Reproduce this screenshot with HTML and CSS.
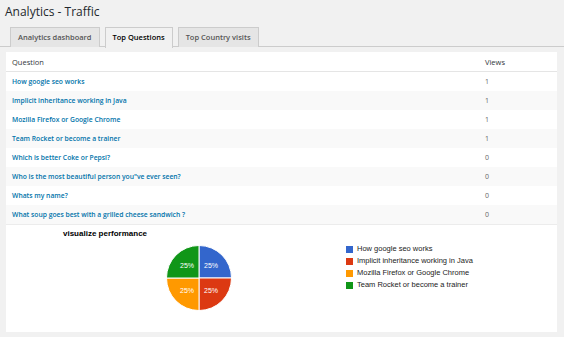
FILE: index.html
```html
<!DOCTYPE html>
<html lang="en">
<head>
  <meta charset="UTF-8">
  <title>Analytics - Traffic</title>
  <link rel="stylesheet" href="styles.css">
</head>
<body>
  <div class="wrap">
    <h1>Analytics - Traffic</h1>

    <nav class="nav-tabs">
      <a class="nav-tab" href="#">Analytics dashboard</a>
      <a class="nav-tab active" href="#">Top Questions</a>
      <a class="nav-tab" href="#">Top Country visits</a>
    </nav>

    <div class="panel">
      <table class="questions">
        <thead>
          <tr>
            <th>Question</th>
            <th class="views">Views</th>
          </tr>
        </thead>
        <tbody>
          <tr><td><a href="#">How google seo works</a></td><td class="views">1</td></tr>
          <tr><td><a href="#">Implicit inheritance working in Java</a></td><td class="views">1</td></tr>
          <tr><td><a href="#">Mozilla Firefox or Google Chrome</a></td><td class="views">1</td></tr>
          <tr><td><a href="#">Team Rocket or become a trainer</a></td><td class="views">1</td></tr>
          <tr><td><a href="#">Which is better Coke or Pepsi?</a></td><td class="views">0</td></tr>
          <tr><td><a href="#">Who is the most beautiful person you"ve ever seen?</a></td><td class="views">0</td></tr>
          <tr><td><a href="#">Whats my name?</a></td><td class="views">0</td></tr>
          <tr><td><a href="#">What soup goes best with a grilled cheese sandwich ?</a></td><td class="views">0</td></tr>
        </tbody>
      </table>

      <div class="chart">
        <div class="chart-title">visualize performance</div>
        <div class="chart-body">
          <svg class="pie" width="66" height="66" viewBox="0 0 66 66">
            <path d="M33 33 L33 0.5 A32.5 32.5 0 0 1 65.5 33 Z" fill="#3366cc"/>
            <path d="M33 33 L65.5 33 A32.5 32.5 0 0 1 33 65.5 Z" fill="#dc3912"/>
            <path d="M33 33 L33 65.5 A32.5 32.5 0 0 1 0.5 33 Z" fill="#ff9900"/>
            <path d="M33 33 L0.5 33 A32.5 32.5 0 0 1 33 0.5 Z" fill="#109618"/>
            <text x="45" y="23">25%</text>
            <text x="45" y="48">25%</text>
            <text x="21" y="48">25%</text>
            <text x="21" y="23">25%</text>
          </svg>
          <ul class="legend">
            <li><span class="swatch blue"></span>How google seo works</li>
            <li><span class="swatch red"></span>Implicit inheritance working in Java</li>
            <li><span class="swatch orange"></span>Mozilla Firefox or Google Chrome</li>
            <li><span class="swatch green"></span>Team Rocket or become a trainer</li>
          </ul>
        </div>
      </div>
    </div>
  </div>
</body>
</html>
```

FILE: styles.css
```css
body {
  margin: 0;
  background-color: #f1f1f1;
  font-family: "Open Sans", sans-serif;
  color: #32373c;
}

.wrap {
  padding: 3px 7px 7px 6px;
}

h1 {
  margin: 0 0 0 -1px;
  font-size: 12px;
  font-weight: 400;
  line-height: 18px;
  color: #23282d;
}

.nav-tabs {
  display: flex;
  gap: 5px;
  margin: 6px -7px 0 -6px;
  padding-left: 10px;
  border-bottom: 1px solid #ccc;
  height: 19px;
}

.nav-tab {
  display: block;
  padding: 0 7px;
  height: 19px;
  line-height: 19px;
  border: 1px solid #ccc;
  border-bottom: none;
  background-color: #e5e5e5;
  color: #555;
  font-size: 7.5px;
  font-weight: 600;
  text-decoration: none;
}

.nav-tab.active {
  background-color: #f1f1f1;
  color: #000;
  height: 20px;
}

.panel {
  margin-top: 5px;
  background-color: #fff;
}

.questions {
  width: 100%;
  table-layout: fixed;
  border-collapse: collapse;
  font-size: 7px;
}

.questions th {
  height: 19px;
  padding: 0 6px;
  text-align: left;
  font-weight: 400;
  font-size: 7.5px;
  color: #32373c;
  border-bottom: 1px solid #e5e5e5;
}

.questions td {
  height: 19px;
  padding: 0 6px;
  color: #666;
}

.questions tbody tr:nth-child(even) td {
  background-color: #f9f9f9;
}

.questions tbody tr:last-child td {
  border-bottom: 1px solid #ececec;
}

.questions .views {
  width: 66px;
}

.questions a {
  color: #0073aa;
  font-size: 6.75px;
  font-weight: 600;
  text-decoration: none;
}

.chart {
  padding: 4px 0 21px;
  font-family: "Liberation Sans", Arial, sans-serif;
}

.chart-title {
  padding-left: 57px;
  font-size: 8px;
  font-weight: 700;
  line-height: 10px;
  color: #000;
}

.chart-body {
  display: flex;
  align-items: flex-start;
  margin-top: 6px;
}

.pie {
  display: block;
  margin-left: 160px;
}

.pie path {
  stroke: #fff;
  stroke-width: 1;
}

.pie text {
  fill: #fff;
  font-size: 7px;
  text-anchor: middle;
}

.legend {
  list-style: none;
  margin: -2px 0 0 114px;
  padding: 0;
  font-size: 7.5px;
  line-height: 12px;
  color: #222;
}

.legend li {
  display: flex;
  align-items: center;
}

.swatch {
  display: inline-block;
  width: 7px;
  height: 7px;
  margin-right: 4px;
}

.swatch.blue { background-color: #3366cc; }
.swatch.red { background-color: #dc3912; }
.swatch.orange { background-color: #ff9900; }
.swatch.green { background-color: #109618; }
```
